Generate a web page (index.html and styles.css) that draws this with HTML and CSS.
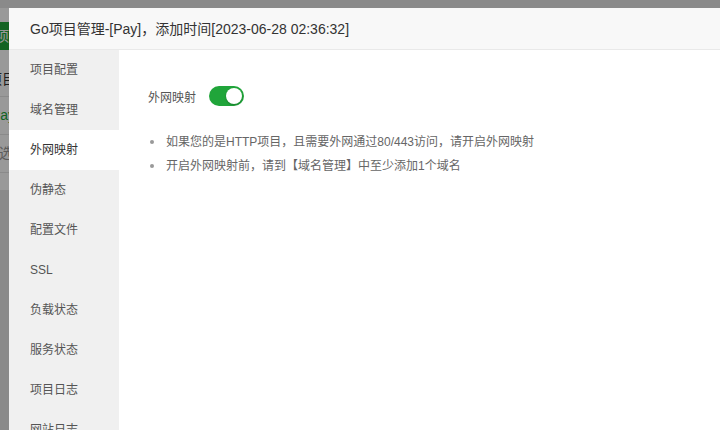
FILE: index.html
```html
<!DOCTYPE html>
<html lang="zh-CN">
<head>
<meta charset="utf-8">
<title>Go项目管理</title>
<link rel="stylesheet" href="styles.css">
</head>
<body>
<div class="page">
  <div class="card">
    <div class="thead"><span class="th-text">项</span></div>
    <div class="trow r1"><span class="t-dark">项目</span></div>
    <div class="trow r2"><span class="t-green">Pay</span></div>
    <div class="trow r3"><span class="t-grey">选</span></div>
    <div class="trow r4"></div>
  </div>
</div>
<div class="mask"></div>
<div class="modal">
  <div class="modal-header">Go项目管理-[Pay]，添加时间[2023-06-28 02:36:32]</div>
  <div class="modal-body">
    <ul class="side">
      <li class="side-item">项目配置</li>
      <li class="side-item">域名管理</li>
      <li class="side-item active">外网映射</li>
      <li class="side-item">伪静态</li>
      <li class="side-item">配置文件</li>
      <li class="side-item">SSL</li>
      <li class="side-item">负载状态</li>
      <li class="side-item">服务状态</li>
      <li class="side-item">项目日志</li>
      <li class="side-item">网站日志</li>
    </ul>
    <div class="content">
      <div class="form-row">
        <span class="label">外网映射</span>
        <span class="switch"><span class="knob"></span></span>
      </div>
      <ul class="tips">
        <li>如果您的是HTTP项目，且需要外网通过80/443访问，请开启外网映射</li>
        <li>开启外网映射前，请到【域名管理】中至少添加1个域名</li>
      </ul>
    </div>
  </div>
</div>
</body>
</html>
```
FILE: styles.css
```css
html, body {
  margin: 0;
  padding: 0;
  width: 720px;
  height: 430px;
  overflow: hidden;
}
body {
  font-family: "Liberation Sans", "Noto Sans CJK SC", sans-serif;
  position: relative;
  background: #e6e6e6;
}
.page {
  padding-top: 8px;
}
.card {
  background: #fff;
  height: 182px;
  padding-top: 14px;
  box-sizing: border-box;
}
.thead {
  height: 28px;
  background: #20a53a;
  color: #fff;
  font-size: 14px;
  line-height: 28px;
  overflow: hidden;
  white-space: nowrap;
}
.th-text { margin-left: -5px; }
.trow {
  border-bottom: 1px solid #e6e6e6;
  font-size: 14px;
  white-space: nowrap;
  overflow: hidden;
}
.r1 { height: 34px; line-height: 34px; margin-top: 12px; }
.r2 { height: 37px; line-height: 37px; }
.r3 { height: 37px; line-height: 37px; }
.r4 { height: 10px; border-bottom: 0; }
.t-dark { color: #333; margin-left: -12px; }
.t-green { color: #20a53a; margin-left: -9px; }
.t-grey { color: #999; margin-left: -1px; }

.mask {
  position: absolute;
  inset: 0;
  background: rgba(0, 0, 0, 0.4);
}
.modal {
  position: absolute;
  left: 9px;
  top: 8px;
  right: 0;
  bottom: 0;
  background: #fff;
  display: flex;
  flex-direction: column;
}
.modal-header {
  height: 41px;
  line-height: 42px;
  background: #f8f8f8;
  border-bottom: 1px solid #e9e9e9;
  padding-left: 21px;
  font-size: 14px;
  color: #333;
  flex: none;
}
.modal-body {
  flex: 1;
  display: flex;
  min-height: 0;
}
.side {
  list-style: none;
  margin: 0;
  padding: 0;
  width: 110px;
  background: #f0f0f0;
  flex: none;
}
.side-item {
  height: 40px;
  line-height: 41px;
  padding-left: 21px;
  font-size: 12px;
  color: #555;
}
.side-item.active {
  background: #fff;
  color: #333;
}
.content {
  flex: 1;
  padding: 36px 0 0 29px;
}
.form-row {
  display: flex;
  align-items: center;
  height: 20px;
}
.label {
  font-size: 12px;
  color: #555;
  width: 61px;
}
.switch {
  width: 35px;
  height: 20px;
  border-radius: 10px;
  background: #20a53a;
  position: relative;
  display: inline-block;
}
.knob {
  position: absolute;
  right: 2px;
  top: 2px;
  width: 16px;
  height: 16px;
  border-radius: 50%;
  background: #fff;
  box-shadow: 0 1px 2px rgba(0,0,0,0.25);
}
.tips {
  margin: 24px 0 0 0;
  padding: 0 0 0 18px;
  font-size: 12px;
  color: #666;
  list-style: none;
}
.tips li {
  line-height: 24px;
  position: relative;
}
.tips li::before {
  content: "";
  position: absolute;
  left: -16px;
  top: 10px;
  width: 4px;
  height: 4px;
  border-radius: 50%;
  background: #999;
}
```
